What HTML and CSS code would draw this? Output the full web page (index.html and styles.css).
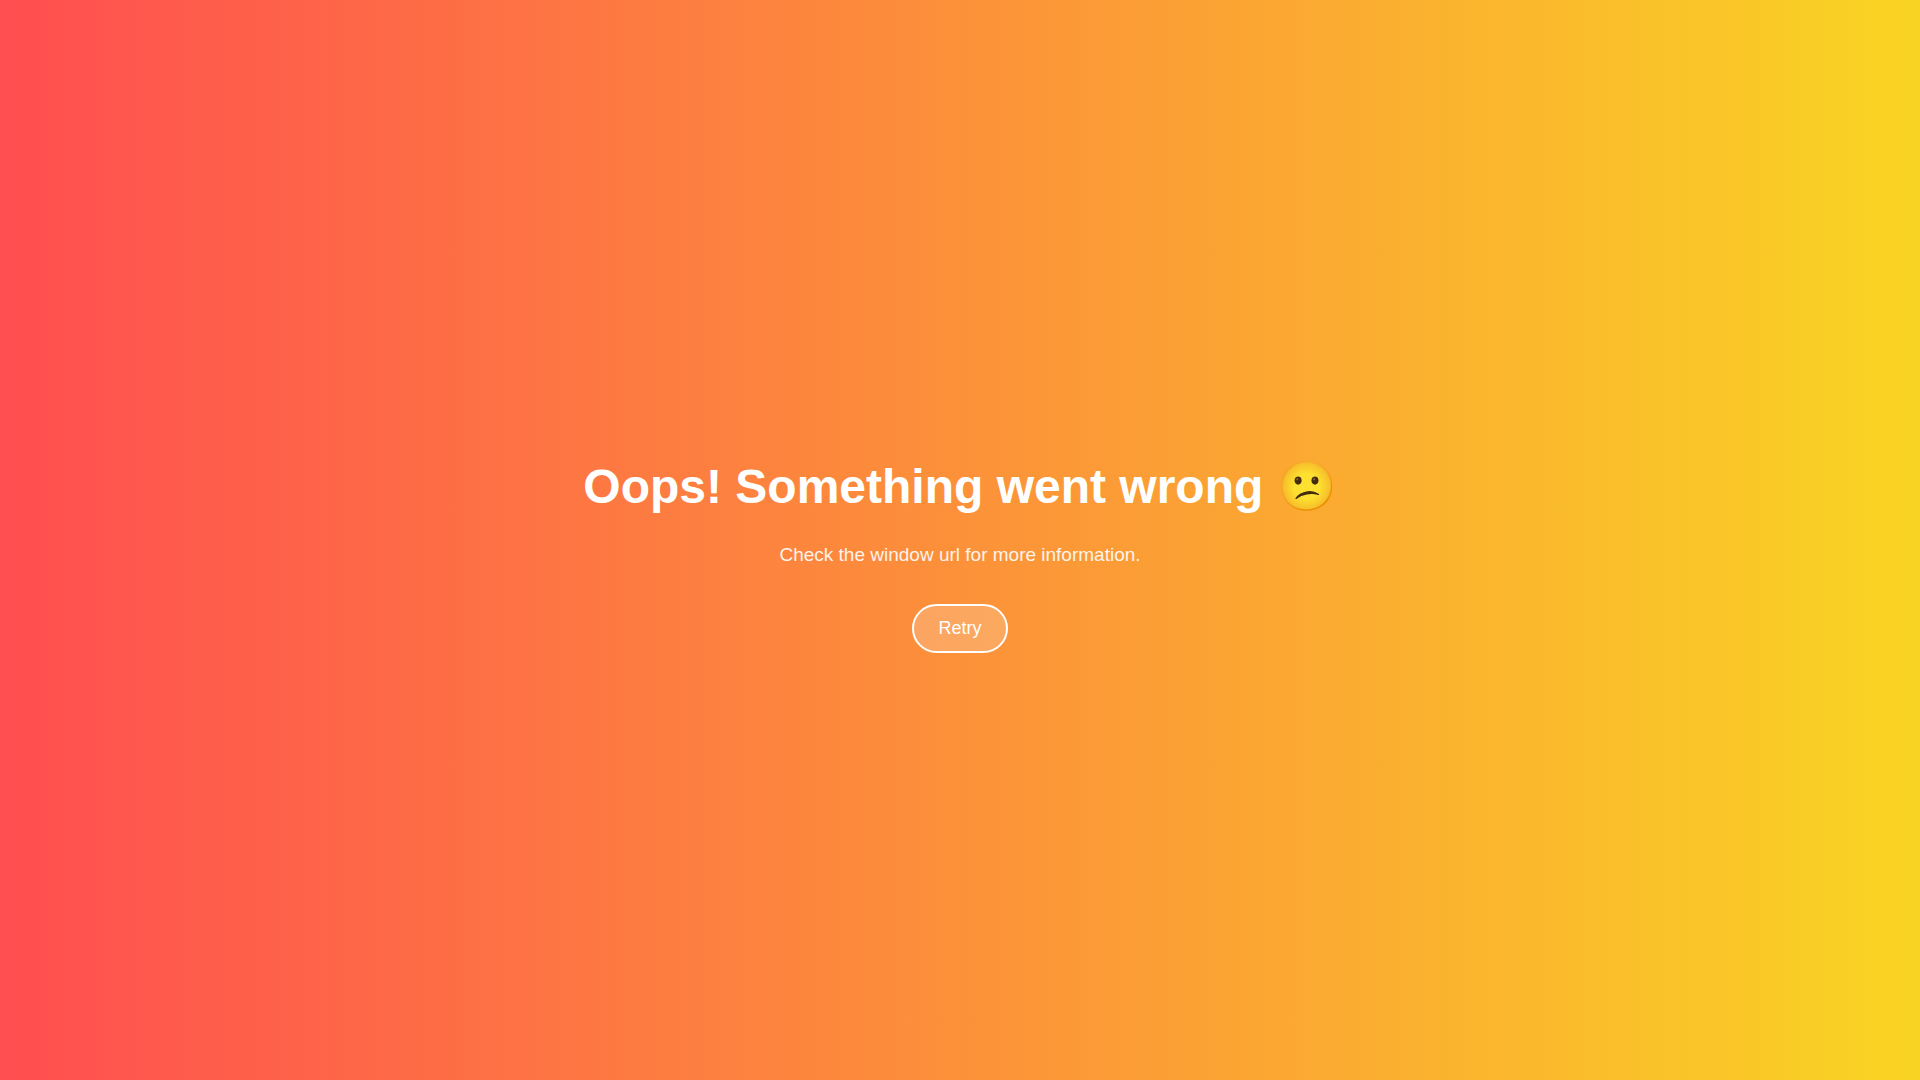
FILE: index.html
```html
<!DOCTYPE html>
<html lang="en">
<head>
	<meta charset="utf-8">
	<meta name="viewport" content="width=device-width, initial-scale=1">
	<title>Error</title>
	<link rel="stylesheet" href="styles.css">
</head>
<body>
	<main class="container">
		<h1>Oops! Something went wrong 😕</h1>
		<p>Check the window url for more information.</p>
		<button type="button" class="retry" id="retry">Retry</button>
	</main>
<script>
	document.getElementById('retry').onclick = function(){
		location.reload();
	}
</script>
</body>
</html>
```
FILE: styles.css
```css
*{
	margin: 0;
	padding: 0;
	box-sizing: border-box;
}
body{
	min-height: 100vh;
	display: flex;
	justify-content: center;
	align-items: center;
	font-family: "Liberation Sans", Arial, sans-serif;
	color: #fff;
	background: linear-gradient(to right, #ff4e50, #f9d423);
}
.container{
	text-align: center;
}
h1{
	font-size: 48px;
	margin: 31px 0 29px;
}
p{
	font-size: 19px;
	margin-bottom: 38px;
	opacity: 0.9;
}
.retry{
	padding: 12px 24px;
	font-family: inherit;
	font-size: 18px;
	color: #fff;
	background: rgba(255, 255, 255, 0.2);
	border: 2px solid #fff;
	border-radius: 25px;
	cursor: pointer;
}
.retry:hover{
	background: rgba(255, 255, 255, 0.4);
}
```
